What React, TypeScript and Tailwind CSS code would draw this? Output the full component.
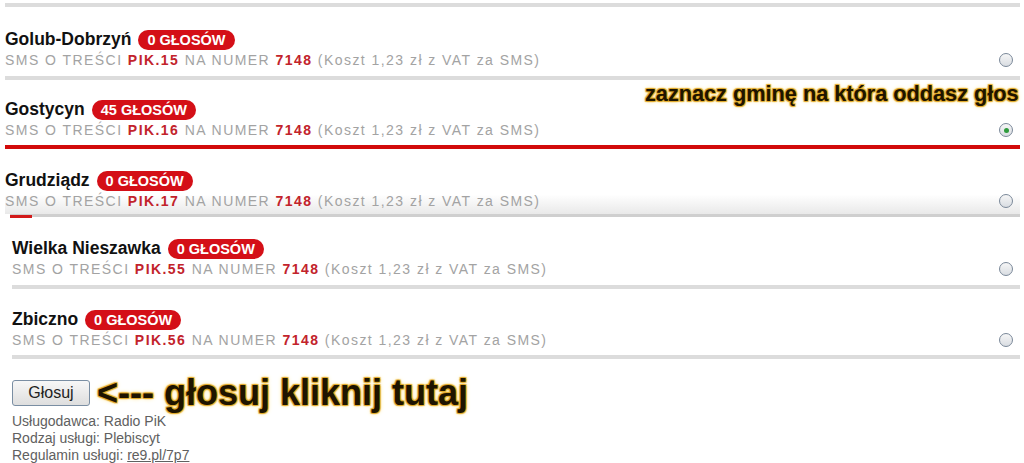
import React from "react";

type Row = {
  name: string;
  votes: string;
  code: string;
  pt: string;
  pb: string;
  checked?: boolean;
  bar: "gray" | "red" | "shadow";
};

const rows: Row[] = [
  { name: "Golub-Dobrzyń", votes: "0 GŁOSÓW", code: "PIK.15", pt: "pt-[23px]", pb: "pb-[6px]", bar: "gray" },
  { name: "Gostycyn", votes: "45 GŁOSÓW", code: "PIK.16", pt: "pt-[20px]", pb: "pb-[5px]", checked: true, bar: "red" },
  { name: "Grudziądz", votes: "0 GŁOSÓW", code: "PIK.17", pt: "pt-[22px]", pb: "pb-[3px]", bar: "shadow" },
  { name: "Wielka Nieszawka", votes: "0 GŁOSÓW", code: "PIK.55", pt: "pt-[22px]", pb: "pb-[6px]", bar: "gray" },
  { name: "Zbiczno", votes: "0 GŁOSÓW", code: "PIK.56", pt: "pt-[21px]", pb: "pb-[5px]", bar: "gray" },
];

const glow = {
  textShadow:
    "0 0 1px #b07800, 1px 1px 1px #e6b030, -1px -1px 1px #e6b030, 1px -1px 1px #e6b030, -1px 1px 1px #e6b030, 0 0 5px #ffe080",
};

function Radio({ checked }: { checked?: boolean }) {
  return (
    <span className="flex h-[14px] w-[14px] items-center justify-center rounded-full border border-[#7a8899] bg-gradient-to-b from-[#f6f6f6] to-[#d9dde2]">
      {checked && <span className="h-[5px] w-[5px] rounded-full bg-[#2e9b3c]" />}
    </span>
  );
}

function VoteRow({ r }: { r: Row }) {
  return (
    <div>
      <div className={`${r.pt} ${r.pb} ${r.bar === "shadow" ? "bg-gradient-to-b from-white from-70% to-[#e9e9e9]" : ""}`}>
        <div className="flex h-[20px] items-center">
          <span className="text-[17.5px] font-bold leading-none text-[#111]">{r.name}</span>
          <span className="ml-[7px] flex h-[20px] items-center rounded-full bg-[#d40f17] px-[9px] text-[14.5px] font-bold leading-none text-white">
            {r.votes}
          </span>
        </div>
        <div className="flex h-[20px] items-center justify-between pr-[7px]">
          <span className="text-[14px] leading-none tracking-[1.45px] text-[#a3a3a3]">
            SMS O TREŚCI <b className="text-[#c2232b]">{r.code}</b> NA NUMER{" "}
            <b className="text-[#c2232b]">7148</b> (Koszt 1,23 zł z VAT za SMS)
          </span>
          <Radio checked={r.checked} />
        </div>
      </div>
      {r.bar === "gray" && <div className="h-[4px] bg-[#dcdcdc]" />}
      {r.bar === "red" && <div className="h-[4px] bg-[#d20a0a]" />}
      {r.bar === "shadow" && (
        <div className="ml-[5px] flex h-[3px] bg-[#cfcfcf]">
          <div className="mt-[1px] h-[3px] w-[22px] bg-[#d21a1a]" />
        </div>
      )}
    </div>
  );
}

export default function App() {
  const font = { fontFamily: '"Liberation Sans", Arial, sans-serif' };
  return (
    <div className="relative h-[463px] w-[1024px] overflow-hidden bg-white" style={font}>
      <div className="pl-[5px] pr-[4px] pt-[3px]">
        <div className="h-[4px] bg-[#dcdcdc]" />
        {rows.slice(0, 3).map((r) => (
          <VoteRow key={r.name} r={r} />
        ))}
        <div className="pl-[7px]">
          {rows.slice(3).map((r) => (
            <VoteRow key={r.name} r={r} />
          ))}
        </div>
        <div className="mt-[21px] flex h-[26px] items-center pl-[7px]">
          <button className="h-[26px] w-[78px] rounded-[3px] border border-[#7a8ea3] bg-gradient-to-b from-[#f7f7f7] to-[#dedede] text-[16px] text-[#222]">
            Głosuj
          </button>
          <span className="ml-[7px] text-[36px] font-bold leading-none text-[#1e1400]" style={glow}>
            &lt;--- głosuj kliknij tutaj
          </span>
        </div>
        <div className="mt-[7px] pl-[7px] text-[14px] leading-[17px] text-[#606060]">
          <div>Usługodawca: Radio PiK</div>
          <div>Rodzaj usługi: Plebiscyt</div>
          <div>
            Regulamin usługi: <span className="underline">re9.pl/7p7</span>
          </div>
        </div>
      </div>
      <div
        className="absolute left-[645px] top-[83px] text-[21.7px] font-bold leading-none text-[#1e1400]"
        style={glow}
      >
        zaznacz gminę na która oddasz głos
      </div>
    </div>
  );
}
